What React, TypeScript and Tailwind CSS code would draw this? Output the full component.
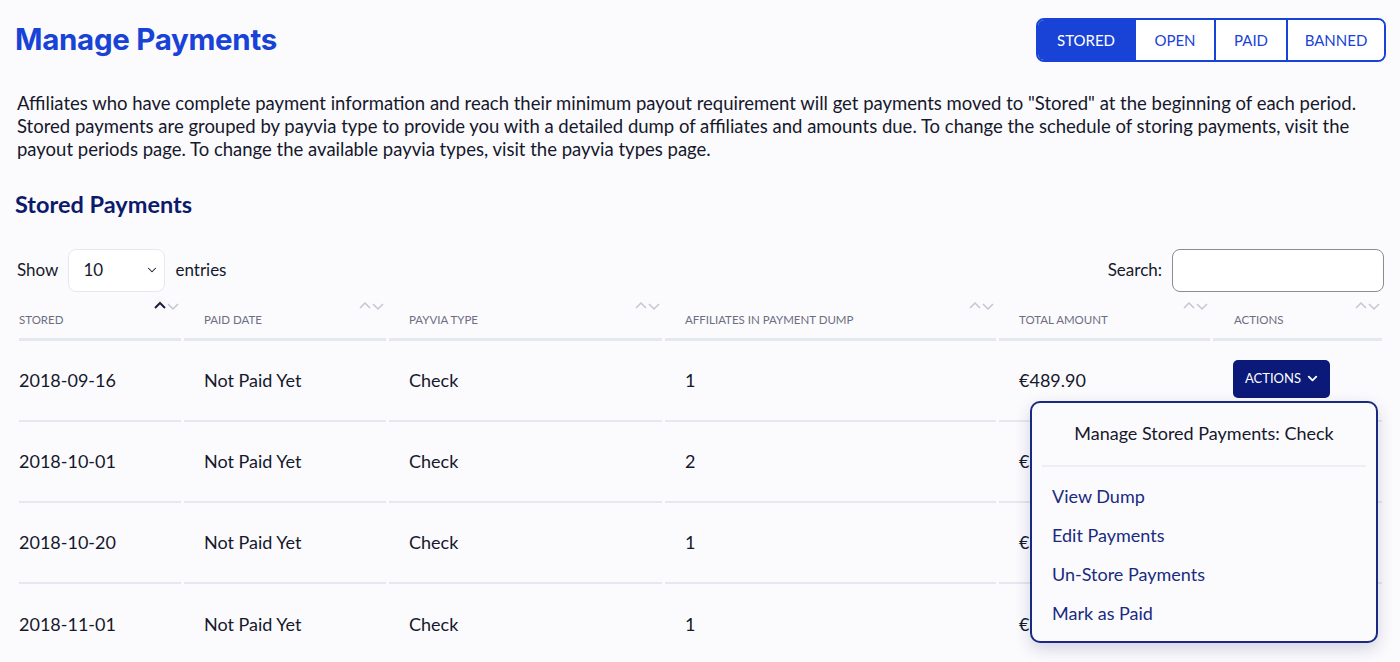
import { ChevronDown } from "lucide-react";

const rows = [
  { stored: "2018-09-16", paid: "Not Paid Yet", type: "Check", count: "1", total: "€489.90" },
  { stored: "2018-10-01", paid: "Not Paid Yet", type: "Check", count: "2", total: "€312.40" },
  { stored: "2018-10-20", paid: "Not Paid Yet", type: "Check", count: "1", total: "€150.00" },
  { stored: "2018-11-01", paid: "Not Paid Yet", type: "Check", count: "1", total: "€275.60" },
];

const columns = [
  { label: "STORED", w: "w-[162px]", pad: "pl-0", active: true },
  { label: "PAID DATE", w: "w-[202px]", pad: "pl-[20px]" },
  { label: "PAYVIA TYPE", w: "w-[273px]", pad: "pl-[20px]" },
  { label: "AFFILIATES IN PAYMENT DUMP", w: "w-[331px]", pad: "pl-[20px]" },
  { label: "TOTAL AMOUNT", w: "w-[211px]", pad: "pl-[20px]" },
  { label: "ACTIONS", w: "w-[169px]", pad: "pl-[21px]" },
];

function SortIcon({ active }: { active?: boolean }) {
  return (
    <svg width="26" height="10" viewBox="0 0 26 10" className="absolute right-[1px] top-[8px]">
      <path d="M1 7 L6 2 L11 7" fill="none" stroke={active ? "#1b1f3b" : "#c4c6d0"} strokeWidth={active ? 2 : 1.5} />
      <path d="M14 3 L19 8 L24 3" fill="none" stroke="#c4c6d0" strokeWidth="1.5" />
    </svg>
  );
}

const tabs = [
  { t: "STORED", w: "w-[96px]" },
  { t: "OPEN", w: "w-[80px]" },
  { t: "PAID", w: "w-[72px]" },
  { t: "BANNED", w: "w-[98px]" },
];

export default function App() {
  return (
    <div className="min-h-[662px] bg-[#fbfbfe] px-[17px] text-[#16182b]" style={{ fontFamily: "Lato, sans-serif" }}>
      <div className="flex items-center justify-between pt-[18px]">
        <h1 className="ml-[-2px] text-[29.5px] font-bold leading-none text-[#1843d6]" style={{ fontFamily: "Inter, sans-serif", letterSpacing: "-0.3px" }}>
          Manage Payments
        </h1>
        <div className="mr-[-3px] flex h-[44px] overflow-hidden rounded-[8px] border-2 border-[#1843d6] text-[15px]">
          {tabs.map(({ t, w }, i) => (
            <div
              key={t}
              className={
                i === 0
                  ? `flex ${w} items-center justify-center bg-[#1843d6] text-white`
                  : `flex ${w} items-center justify-center border-l-2 border-[#1843d6] bg-white text-[#1843d6]`
              }
            >
              {t}
            </div>
          ))}
        </div>
      </div>

      <p className="mt-[30px] whitespace-nowrap text-[18.5px] leading-[23px]">
        Affiliates who have complete payment information and reach their minimum payout requirement will get payments moved to "Stored" at the beginning of each period.
        <br />
        Stored payments are grouped by payvia type to provide you with a detailed dump of affiliates and amounts due. To change the schedule of storing payments, visit the
        <br />
        payout periods page. To change the available payvia types, visit the payvia types page.
      </p>

      <h2 className="mt-[32px] ml-[-2px] text-[23.5px] font-bold leading-none text-[#0c1a6b]">Stored Payments</h2>

      <div className="mt-[32px] flex items-center justify-between">
        <div className="flex items-center gap-[10px] text-[17px]">
          <span>Show</span>
          <div className="flex h-[43px] w-[97px] items-center justify-between rounded-[8px] border border-[#e6e7ef] bg-white pl-[14px] pr-[5px]">
            <span>10</span>
            <ChevronDown size={14} strokeWidth={1.75} />
          </div>
          <span>entries</span>
        </div>
        <div className="mr-[-1px] flex items-center gap-[10px] text-[17px]">
          <span>Search:</span>
          <div className="h-[43px] w-[212px] rounded-[8px] border border-[#8a8b93] bg-white" />
        </div>
      </div>

      <div className="relative">
        <table className="mt-[1px] ml-[-1px] w-[1369px] table-fixed border-separate border-spacing-x-[3px] border-spacing-y-0">
          <thead>
            <tr>
              {columns.map((c) => (
                <th
                  key={c.label}
                  className={`relative ${c.w} ${c.pad} h-[48px] border-b-[3px] border-[#e5e8f0] pt-[10px] text-left align-middle text-[11.5px] font-normal text-[#6c6e80]`}
                >
                  {c.label}
                  <SortIcon active={c.active} />
                </th>
              ))}
            </tr>
          </thead>
          <tbody>
            {rows.map((r, i) => {
              const line = i < rows.length - 1 ? "border-b-2 border-[#e5e8f0]" : "";
              return (
                <tr key={r.stored}>
                  <td className={`h-[81px] text-[18px] ${line}`}>{r.stored}</td>
                  <td className={`pl-[20px] text-[18px] ${line}`}>{r.paid}</td>
                  <td className={`pl-[20px] text-[18px] ${line}`}>{r.type}</td>
                  <td className={`pl-[20px] text-[18px] ${line}`}>{r.count}</td>
                  <td className={`pl-[20px] text-[18px] ${line}`}>{r.total}</td>
                  <td className={`pl-[20px] ${line}`}>
                    {i === 0 && (
                      <button className="mt-[-3px] flex h-[38px] items-center gap-[4px] rounded-[5px] bg-[#0b1a78] pl-[12px] pr-[10px] text-[13px] text-white">
                        ACTIONS
                        <ChevronDown size={15} strokeWidth={3} />
                      </button>
                    )}
                  </td>
                </tr>
              );
            })}
          </tbody>
        </table>

        <div className="absolute left-[1013px] top-[108px] w-[348px] rounded-[10px] border-2 border-[#1a2a80] bg-[#fbfbfe] px-[10px] pb-[8px] shadow-[0_6px_16px_rgba(20,30,80,0.18)]">
          <div className="border-b-2 border-[#eceef4] pt-[18px] pb-[20px] text-center text-[18px] leading-[24px]">
            Manage Stored Payments: Check
          </div>
          <ul className="mt-[10px] px-[10px] text-[18px] text-[#1a2a80]">
            {["View Dump", "Edit Payments", "Un-Store Payments", "Mark as Paid"].map((x) => (
              <li key={x} className="h-[39px] leading-[39px]">
                {x}
              </li>
            ))}
          </ul>
        </div>
      </div>
    </div>
  );
}
